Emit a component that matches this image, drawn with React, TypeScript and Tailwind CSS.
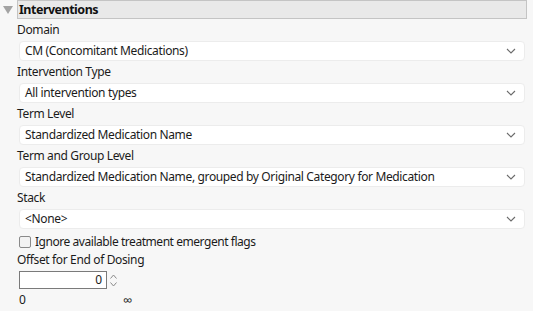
import React from "react";

const font = { fontFamily: '"Noto Sans", "Open Sans", sans-serif' };

function Chevron() {
  return (
    <svg width="10" height="6" viewBox="0 0 10 6" className="shrink-0">
      <path d="M1 1 L5 5 L9 1" fill="none" stroke="#6b6b6b" strokeWidth="1.1" />
    </svg>
  );
}

function Dropdown({ value }: { value: string }) {
  return (
    <div className="ml-[2px] w-[506px] h-[20px] bg-white rounded-[4px] border border-[#ececec] flex items-center pl-[5px] pr-[8px] text-[12px] tracking-[-0.36px] text-[#1b1b1b]">
      <span className="flex-1 whitespace-nowrap leading-[16px]">{value}</span>
      <Chevron />
    </div>
  );
}

function Label({ text }: { text: string }) {
  return (
    <div className="h-[22px] flex items-center text-[12px] tracking-[-0.36px] text-[#1b1b1b] leading-[16px]">{text}</div>
  );
}

export default function App() {
  return (
    <div className="w-[533px] h-[311px] bg-[#f7f7f7] flex overflow-hidden" style={font}>
      <div className="w-[17px] shrink-0 pt-[6px] pl-[3px]">
        <svg width="10" height="8" viewBox="0 0 10 8">
          <path d="M0 0 L10 0 L5 8 Z" fill="#a3a3a3" />
        </svg>
      </div>
      <div className="flex flex-col w-[510px]">
        <div className="h-[19px] bg-[#e9e9e9] border border-[#c4c4c4] flex items-center pl-[1px] text-[12.5px] tracking-[-0.5px] font-bold text-[#111] leading-[16px]">
          Interventions
        </div>
        <Label text="Domain" />
        <Dropdown value="CM (Concomitant Medications)" />
        <Label text="Intervention Type" />
        <Dropdown value="All intervention types" />
        <Label text="Term Level" />
        <Dropdown value="Standardized Medication Name" />
        <Label text="Term and Group Level" />
        <Dropdown value="Standardized Medication Name, grouped by Original Category for Medication" />
        <Label text="Stack" />
        <Dropdown value="<None>" />
        <div className="mt-[6px] h-[14px] flex items-center gap-[4px] pl-[2px] text-[12px] tracking-[-0.45px] text-[#1b1b1b] leading-[16px]">
          <div className="w-[12px] h-[12px] border border-[#8a8a8a] rounded-[2px] bg-[#f3f3f3]" />
          <span>Ignore available treatment emergent flags</span>
        </div>
        <div className="h-[22px] flex items-center text-[12px] tracking-[-0.36px] text-[#1b1b1b] leading-[16px]">Offset for End of Dosing</div>
        <div className="flex items-center ml-[2px] h-[18px]">
          <div className="w-[88px] h-[18px] bg-white border border-[#7a7a7a] flex items-center justify-end pr-[4px] text-[12px] text-[#1b1b1b] leading-[16px]">
            0
          </div>
          <div className="ml-[3px] flex flex-col gap-[3px]">
            <svg width="7" height="5" viewBox="0 0 7 5">
              <path d="M0.5 4.5 L3.5 1 L6.5 4.5" fill="none" stroke="#8a8a8a" strokeWidth="1" />
            </svg>
            <svg width="7" height="5" viewBox="0 0 7 5">
              <path d="M0.5 0.5 L3.5 4 L6.5 0.5" fill="none" stroke="#8a8a8a" strokeWidth="1" />
            </svg>
          </div>
        </div>
        <div className="ml-[2px] h-[22px] flex items-center text-[12px] text-[#1b1b1b] leading-[16px]">
          <span className="w-[104px]">0</span>
          <span className="text-[13px]">∞</span>
        </div>
      </div>
    </div>
  );
}
